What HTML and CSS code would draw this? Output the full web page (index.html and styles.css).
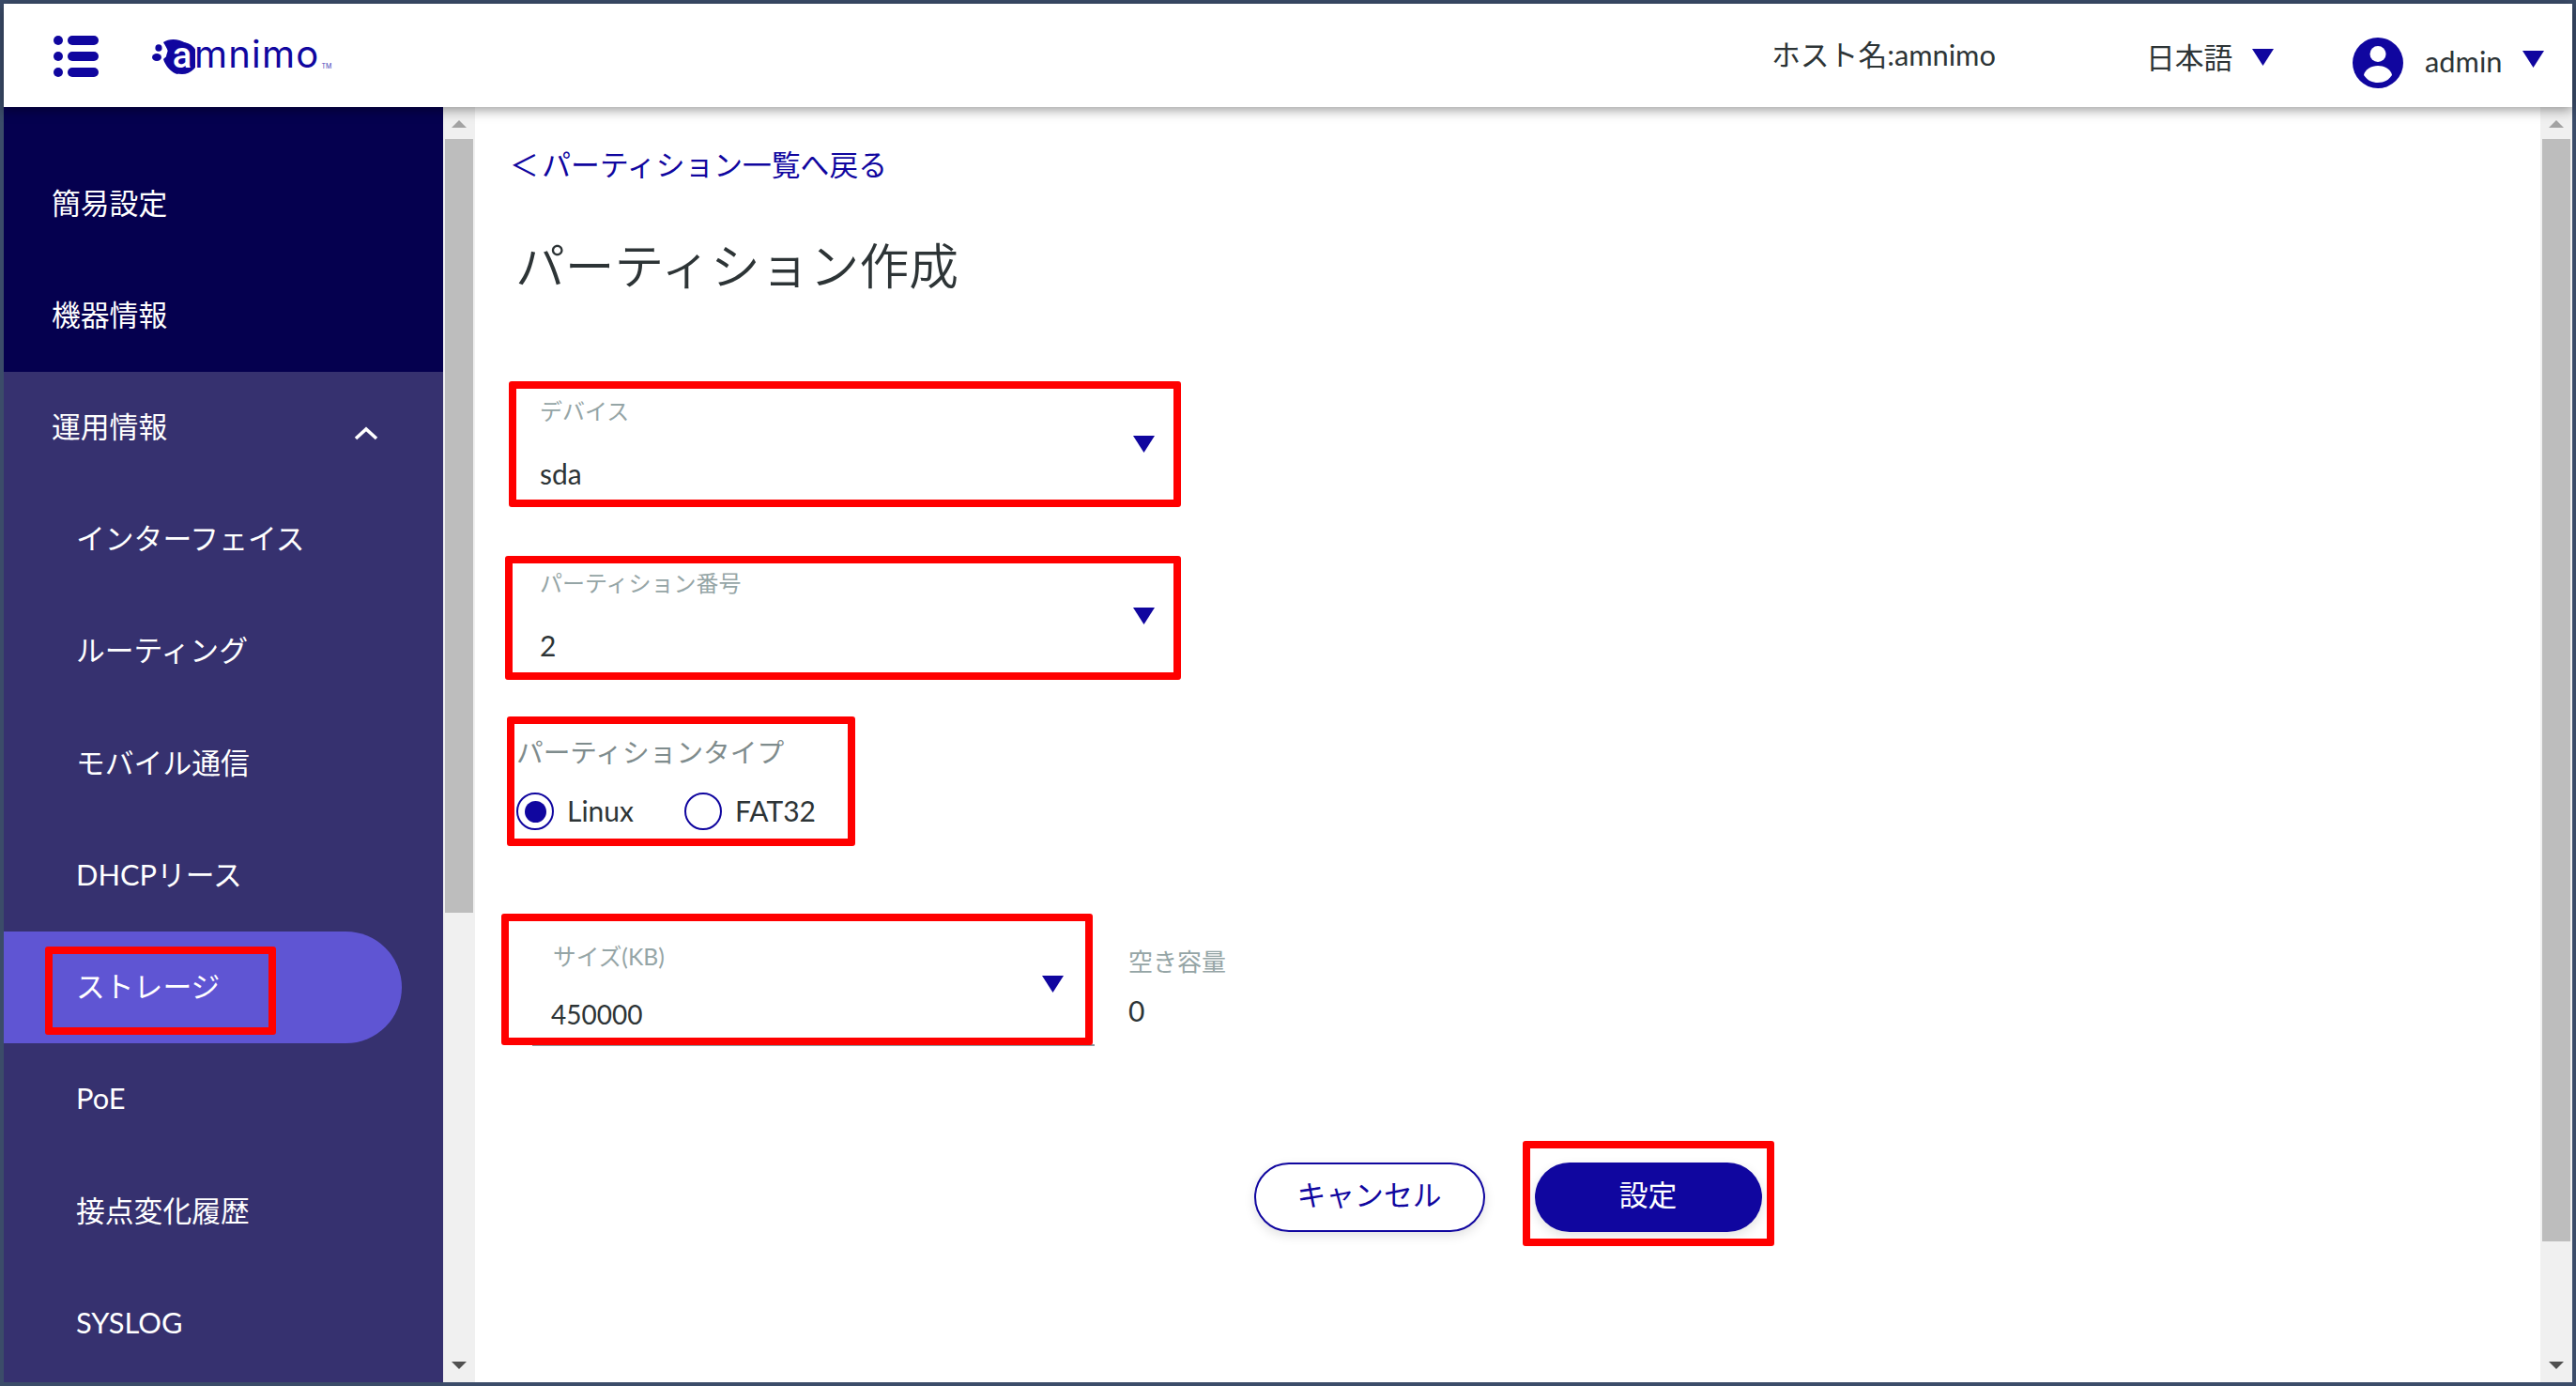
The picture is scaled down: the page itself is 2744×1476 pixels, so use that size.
FILE: index.html
```html
<!DOCTYPE html>
<html lang="ja">
<head>
<meta charset="utf-8">
<title>パーティション作成</title>
<link rel="stylesheet" href="styles.css">
</head>
<body>
<div class="window">
  <header class="topbar">
    <div class="menu-icon"><span></span><span></span><span></span></div>
    <div class="logo">
      <svg class="logo-mark" viewBox="0 0 46 42" width="46" height="42">
        <circle cx="32" cy="24" r="17" fill="#10069f"/>
        <path d="M12 7C18 3 28 3 36 8L40 30 27 41C21 40 14 32 12 25C14 23 17 21 17 19C17 14 14 11 12 7Z" fill="#10069f"/>
        <ellipse cx="7" cy="13" rx="3.6" ry="3.8" fill="#10069f"/>
        <ellipse cx="5" cy="23" rx="5" ry="4" fill="#10069f"/>
        <text x="32" y="34" class="logo-a">a</text>
      </svg>
      <span class="logo-word">mnimo</span><span class="logo-tm">TM</span>
    </div>
    <div class="host">ホスト名:amnimo</div>
    <div class="lang"><span>日本語</span><i class="caret"></i></div>
    <div class="user">
      <svg class="avatar" viewBox="0 0 54 54" width="54" height="54">
        <circle cx="27" cy="27" r="27" fill="#10069f"/>
        <circle cx="27" cy="17.5" r="8.5" fill="#fff"/>
        <path d="M12 40C13 34 20 30 27 30S41 34 42 40C38 46 33 48 27 48S16 46 12 40Z" fill="#fff"/>
      </svg>
      <span class="user-name">admin</span><i class="caret"></i>
    </div>
  </header>
  <div class="content">
    <nav class="sidebar">
      <ul class="nav-top">
        <li class="nav-item">簡易設定</li>
        <li class="nav-item">機器情報</li>
      </ul>
      <ul class="nav-sub">
        <li class="nav-item nav-group">運用情報
          <svg class="chevron" viewBox="0 0 26 16" width="26" height="16"><path d="M2 14L13 4l11 10" fill="none" stroke="#fff" stroke-width="3.6"/></svg>
        </li>
        <li class="nav-item nav-child">インターフェイス</li>
        <li class="nav-item nav-child">ルーティング</li>
        <li class="nav-item nav-child">モバイル通信</li>
        <li class="nav-item nav-child">DHCPリース</li>
        <li class="nav-item nav-child nav-active">ストレージ</li>
        <li class="nav-item nav-child">PoE</li>
        <li class="nav-item nav-child">接点変化履歴</li>
        <li class="nav-item nav-child">SYSLOG</li>
      </ul>
    </nav>
    <div class="scrollbar">
      <i class="sb-up"></i>
      <div class="sb-thumb sb-thumb-side"></div>
      <i class="sb-down"></i>
    </div>
    <main class="main">
      <a class="back"><span class="back-mark">＜</span>パーティション一覧へ戻る</a>
      <h1 class="title">パーティション作成</h1>
      <div class="select select-device">
        <div class="select-label">デバイス</div>
        <div class="select-value">sda</div>
        <i class="caret select-caret"></i>
      </div>
      <div class="select select-number">
        <div class="select-label">パーティション番号</div>
        <div class="select-value">2</div>
        <i class="caret select-caret"></i>
      </div>
      <div class="type-label">パーティションタイプ</div>
      <div class="radios">
        <span class="radio radio-on"></span><span class="radio-text">Linux</span>
        <span class="radio"></span><span class="radio-text">FAT32</span>
      </div>
      <div class="size-row">
        <div class="select select-size">
          <div class="select-label">サイズ(KB)</div>
          <div class="select-value">450000</div>
          <i class="caret select-caret"></i>
        </div>
        <div class="free">
          <div class="free-label">空き容量</div>
          <div class="free-value">0</div>
        </div>
      </div>
      <div class="actions">
        <button class="btn btn-cancel">キャンセル</button>
        <button class="btn btn-submit">設定</button>
      </div>
    </main>
    <div class="scrollbar">
      <i class="sb-up"></i>
      <div class="sb-thumb sb-thumb-main"></div>
      <i class="sb-down"></i>
    </div>
  </div>
  <div class="mark mark-nav"></div>
  <div class="mark mark-device"></div>
  <div class="mark mark-number"></div>
  <div class="mark mark-type"></div>
  <div class="mark mark-size"></div>
  <div class="mark mark-submit"></div>
</div>
</body>
</html>
```
FILE: styles.css
```css
* { box-sizing: border-box; }
html, body { margin: 0; height: 100%; }
body {
  font-family: "Lato", "Noto Sans CJK JP", sans-serif;
  font-size: 30px;
  color: #2d3436;
  overflow: hidden;
}
ul { list-style: none; margin: 0; padding: 0; }
.window {
  position: relative;
  width: 2744px;
  height: 1476px;
  border: 4px solid #3b4c69;
  display: flex;
  flex-direction: column;
  background: #fff;
}
.topbar {
  position: relative;
  z-index: 2;
  flex: 0 0 110px;
  display: flex;
  align-items: flex-start;
  background: #fff;
  font-size: 30.8px;
  box-shadow: 0 3px 12px rgba(0, 0, 0, .4);
}
.menu-icon {
  margin: 34px 0 0 53px;
  width: 48px;
  display: flex;
  flex-direction: column;
  gap: 7px;
}
.menu-icon span {
  position: relative;
  display: block;
  height: 10px;
  margin-left: 15px;
  background: #10069f;
  border-radius: 5px;
}
.menu-icon span::before {
  content: "";
  position: absolute;
  left: -15px;
  top: 0;
  width: 10px;
  height: 10px;
  border-radius: 50%;
  background: #10069f;
}
.logo {
  margin: 34px 0 0 57px;
  display: flex;
  align-items: flex-start;
  color: #10069f;
  width: 1725px;
  flex: none;
}
.logo-a { font: 500 38px "Roboto", sans-serif; fill: #fff; text-anchor: middle; }
.logo-word {
  font: 400 40px/36px "Inter", sans-serif;
  letter-spacing: 1.2px;
  margin: 2px 0 0 -1px;
}
.logo-tm { font: 400 7px/8px "Inter", sans-serif; margin: 29px 0 0 2px; color: #4a43b8; }
.caret {
  display: block;
  width: 23px;
  height: 18px;
  background: #10069f;
  clip-path: polygon(0 0, 100% 0, 50% 100%);
}
.host { margin-top: 31.5px; line-height: 46px; width: 399px; flex: none; }
.lang {
  display: flex;
  align-items: flex-start;
  width: 220px;
  flex: none;
}
.lang span { margin-top: 34.5px; line-height: 46px; width: 113px; }
.lang .caret { margin-top: 48px; }
.user { display: flex; align-items: flex-start; }
.avatar { margin-top: 36px; }
.user-name { margin: 38.5px 0 0 23px; line-height: 46px; width: 104px; }
.user .caret { margin-top: 50px; }

.content { flex: 1; display: flex; min-height: 0; }
.sidebar {
  flex: 0 0 468px;
  display: flex;
  flex-direction: column;
  color: #fff;
  background: #36316f;
  font-size: 30.8px;
}
.nav-top { background: #05004f; padding-top: 44px; }
.nav-sub { flex: 1; }
.nav-item {
  position: relative;
  height: 119px;
  line-height: 117px;
  padding-left: 51px;
}
.nav-child { padding-left: 77px; height: 119.3px; }
.nav-active {
  width: 424px;
  background: #5f55d3;
  border-radius: 0 60px 60px 0;
}
.chevron { position: absolute; left: 373px; top: 57px; }

.scrollbar {
  flex: 0 0 34px;
  position: relative;
  background: #f0f0f0;
  padding: 34px 2px 0;
}
.sb-thumb { background: #bdbdbd; }
.sb-thumb-side { height: 824px; }
.sb-thumb-main { height: 1174px; }
.sb-up, .sb-down {
  position: absolute;
  left: 9px;
  width: 16px;
  height: 8px;
}
.sb-up { top: 14px; background: #a3a3a3; clip-path: polygon(50% 0, 100% 100%, 0 100%); }
.sb-down { bottom: 14px; background: #505050; clip-path: polygon(0 0, 100% 0, 50% 100%); }

.main {
  flex: 1;
  min-width: 0;
  padding: 39px 0 0 37px;
  overflow: hidden;
}
.back { display: block; line-height: 46px; color: #10069f; font-size: 30.8px; }
.back-mark { margin-right: 3.5px; }
.title {
  margin: 49px 0 0;
  font-size: 52.8px;
  font-weight: 350;
  line-height: 70px;
  padding-left: 6px;
}
.select {
  position: relative;
  width: 680px;
  margin-left: 17px;
  height: 124px;
  padding: 10px 0 0 15px;
}
.select-device { margin-top: 94px; }
.select-number { margin-top: 59px; }
.select-label { font-size: 24px; line-height: 32px; color: #95a5a6; }
.select-value { margin-top: 30px; line-height: 40px; }
.select-caret { position: absolute; right: 10px; top: 52px; }
.type-label { margin-top: 62px; margin-left: 7px; font-size: 28.7px; line-height: 40px; color: #7f8c8d; }
.radios {
  margin: 23px 0 0 7px;
  display: flex;
  align-items: center;
  height: 40px;
}
.radio {
  width: 40px;
  height: 40px;
  border: 2.5px solid #10069f;
  border-radius: 50%;
  display: flex;
  align-items: center;
  justify-content: center;
}
.radio-on::after {
  content: "";
  width: 23px;
  height: 23px;
  border-radius: 50%;
  background: #10069f;
}
.radio-text { margin: 0 0 3px 14px; width: 125px; }
.size-row { margin-top: 101px; display: flex; align-items: flex-start; }
.select-size {
  margin-left: 24px;
  width: 599px;
  height: 129px;
  padding: 18px 0 0 20px;
  border-bottom: 2px solid #8e9aa0;
}
.select-size .select-label { font-size: 24.7px; margin-left: 2px; }
.select-size .select-value { margin-top: 25px; font-size: 28px; }
.select-size .select-caret { right: 33px; top: 54px; }
.free { margin: 22px 0 0 36px; }
.free-label { font-size: 26px; line-height: 34px; color: #95a5a6; }
.free-value { margin-top: 17px; line-height: 36px; }
.actions {
  margin-top: 124px;
  margin-left: -37px;
  display: flex;
  justify-content: center;
  gap: 53px;
}
.btn {
  height: 74px;
  border-radius: 37px;
  font-family: inherit;
  font-size: 30.8px;
  box-shadow: 0 4px 12px rgba(0, 0, 0, .12);
  padding: 0 0 10px;
}
.btn-cancel { width: 246px; background: #fff; border: 2px solid #10069f; color: #10069f; }
.btn-submit { width: 242px; background: #10069f; border: 0; color: #fff; }

.mark {
  position: absolute;
  z-index: 3;
  border: 8px solid #f00;
  border-radius: 3px;
}
.mark-nav { left: 44px; top: 1004px; width: 246px; height: 94px; }
.mark-device { left: 538px; top: 402px; width: 716px; height: 134px; }
.mark-number { left: 534px; top: 588px; width: 720px; height: 132px; }
.mark-type { left: 536px; top: 759px; width: 371px; height: 138px; }
.mark-size { left: 530px; top: 969px; width: 630px; height: 140px; }
.mark-submit { left: 1618px; top: 1211px; width: 268px; height: 112px; }
```
